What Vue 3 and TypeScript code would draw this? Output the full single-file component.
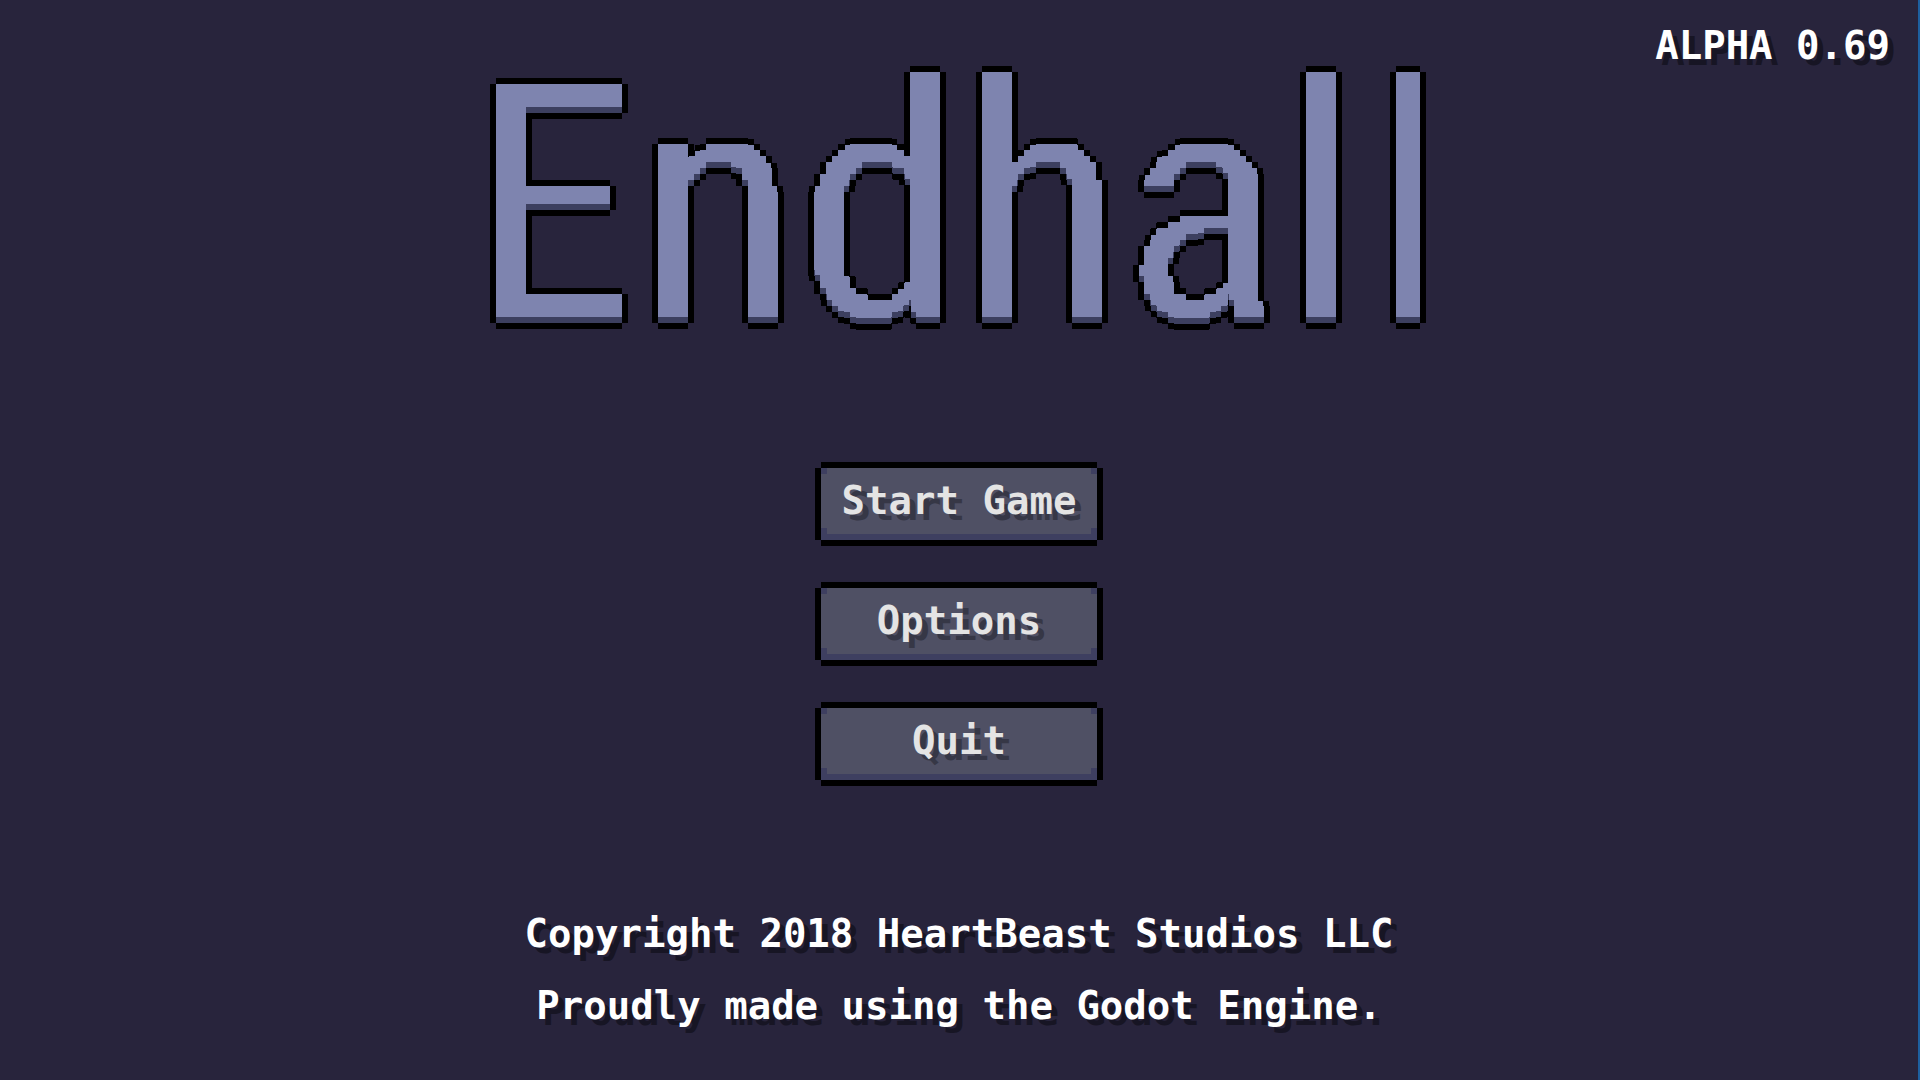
<script setup lang="ts">
import { ref } from 'vue'

interface MenuItem {
  id: string
  label: string
}

const version = 'ALPHA 0.69'

const menu: MenuItem[] = [
  { id: 'start', label: 'Start Game' },
  { id: 'options', label: 'Options' },
  { id: 'quit', label: 'Quit' },
]

const credits: string[] = [
  'Copyright 2018 HeartBeast Studios LLC',
  'Proudly made using the Godot Engine.',
]

const selected = ref<string | null>(null)
</script>

<template>
  <div class="screen">
    <!-- Snaps the title lettering to 6px blocks, then adds its outline and lower bevel -->
    <svg class="defs" width="0" height="0" aria-hidden="true">
      <filter id="bevel" x="-5%" y="-5%" width="110%" height="110%" color-interpolation-filters="sRGB">
        <feFlood x="2" y="2" width="2" height="2" flood-color="#000000" result="dot" />
        <feComposite in="dot" in2="dot" operator="over" x="0" y="0" width="6" height="6" result="cell" />
        <feTile in="cell" result="grid" />
        <feComposite in="SourceAlpha" in2="grid" operator="in" />
        <feComponentTransfer>
          <feFuncA type="discrete" tableValues="0 1" />
        </feComponentTransfer>
        <feMorphology operator="dilate" radius="2" result="solid" />
        <feMorphology in="solid" operator="dilate" radius="6 0" result="across" />
        <feMorphology in="solid" operator="dilate" radius="0 6" result="down" />
        <feComposite in="across" in2="down" operator="over" result="wide" />
        <feFlood flood-color="#000000" />
        <feComposite in2="wide" operator="in" result="outline" />
        <feFlood flood-color="#3c3f5f" />
        <feComposite in2="solid" operator="in" result="shade" />
        <feOffset in="solid" dy="-6" result="raised" />
        <feFlood flood-color="#7e84af" />
        <feComposite in2="raised" operator="in" />
        <feComposite in2="solid" operator="in" result="face" />
        <feMerge>
          <feMergeNode in="outline" />
          <feMergeNode in="shade" />
          <feMergeNode in="face" />
        </feMerge>
      </filter>
    </svg>

    <p class="version">{{ version }}</p>

    <main class="content">
      <h1 class="title">Endhal<span class="tail">l</span></h1>

      <nav class="menu" aria-label="Main menu">
        <button
          v-for="item in menu"
          :key="item.id"
          type="button"
          class="item"
          @click="selected = item.id"
        >
          {{ item.label }}
        </button>
      </nav>
    </main>

    <footer class="credits">
      <p v-for="line in credits" :key="line">{{ line }}</p>
    </footer>
  </div>
</template>

<style>
body {
  background: #28243c;
}
</style>

<style scoped>
.screen {
  position: relative;
  box-sizing: border-box;
  min-height: 100vh;
  display: flex;
  flex-direction: column;
  align-items: center;
  justify-content: space-between;
  border-right: 2px solid #1d5f9f;
  background: #28243c;
  color: #ffffff;
  font: bold 39px/72px "DejaVu Sans Mono", "Liberation Mono", monospace;
  text-shadow: 6px 6px 0 #171524;
}

.defs {
  position: absolute;
}

.version {
  position: absolute;
  top: 10px;
  right: 28px;
  margin: 0;
}

.content {
  display: flex;
  flex-direction: column;
  align-items: center;
}

.title {
  margin: 0;
  padding-top: 32px;
  font: normal 332px/352px "Roboto Condensed", "Open Sans Condensed", sans-serif;
  text-shadow: none;
  filter: url(#bevel);
}

.tail {
  margin-left: 12px;
}

.menu {
  display: flex;
  flex-direction: column;
  gap: 48px;
  padding-top: 84px;
}

.item {
  min-width: 276px;
  height: 72px;
  margin: 0;
  padding: 0 12px 6px;
  border: 0;
  background:
    linear-gradient(#3e3f60, #3e3f60) left top / 6px 6px no-repeat,
    linear-gradient(#3e3f60, #3e3f60) right top / 6px 6px no-repeat,
    linear-gradient(#3e3f60, #3e3f60) left bottom / 6px 12px no-repeat,
    linear-gradient(#3e3f60, #3e3f60) right bottom / 6px 12px no-repeat,
    linear-gradient(#3e3f60, #3e3f60) left bottom / 100% 6px no-repeat,
    #4f5064;
  box-shadow: 0 -6px #000, 0 6px #000, -6px 0 #000, 6px 0 #000;
  color: #e4e4e4;
  font: inherit;
  line-height: 66px;
  text-shadow: 6px 6px 0 #363746;
  cursor: pointer;
}

.item:hover,
.item:focus-visible {
  color: #ffffff;
  outline: none;
}

.credits {
  padding-bottom: 38px;
  text-align: center;
}

.credits p {
  margin: 0;
}
</style>
